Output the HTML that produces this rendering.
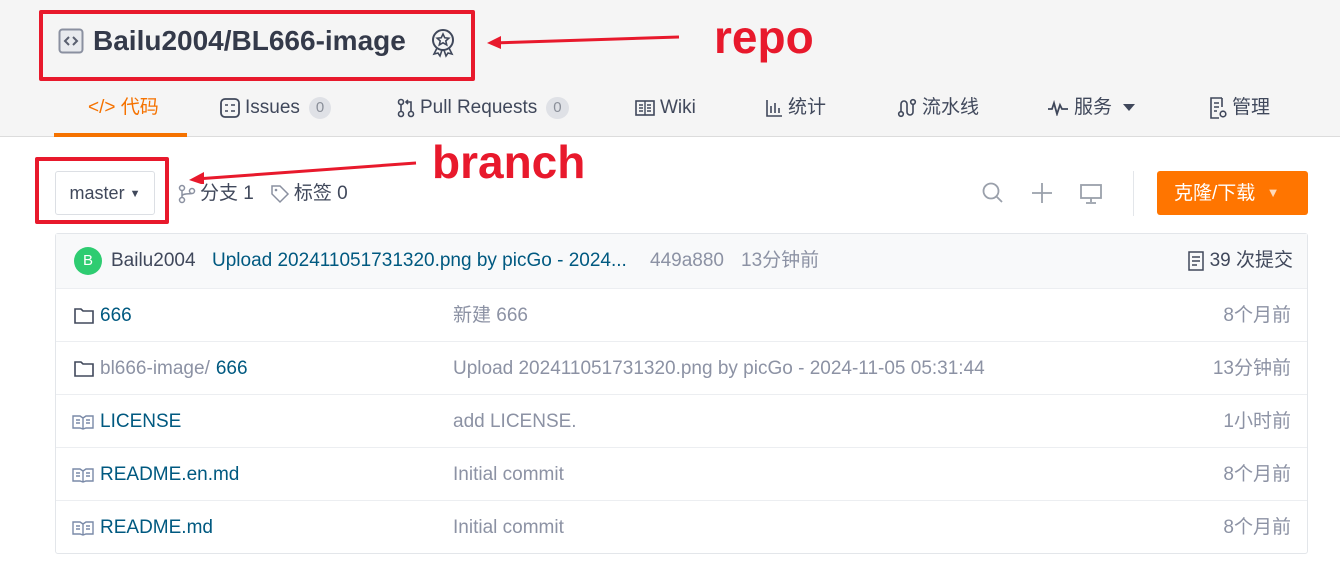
<!DOCTYPE html>
<html><head><meta charset="utf-8"><style>
*{box-sizing:border-box;margin:0;padding:0}
body{width:1340px;height:581px;overflow:hidden;background:#fff;font-family:"Liberation Sans","Noto Sans CJK SC",sans-serif;color:#40485b;position:relative}
.top{position:absolute;left:0;top:0;width:1340px;height:137px;background:#f5f5f5;border-bottom:1px solid #dcdcdc}
.abs{position:absolute;white-space:nowrap}
.red{position:absolute;border:4px solid #e8192c;border-radius:2px}
.ann{position:absolute;color:#e8192c;font-weight:bold;font-size:46px;line-height:1}
.nav{font-size:19px;color:#40485b;top:96px;height:24px;line-height:24px;display:flex;align-items:center;gap:5px}
.badge{display:inline-block;background:#dfe1e6;color:#8a8f99;border-radius:11px;font-size:15px;height:22px;line-height:22px;padding:0 7px;margin-left:4px}
.tbl{position:absolute;left:55px;top:233px;width:1253px;height:321px;border:1px solid #e3e6ea;border-radius:3px}
.row{position:absolute;left:0;width:1251px;height:53px;border-top:1px solid #eceef1;font-size:19px}
.row>span{position:absolute;top:1px;height:52px;line-height:52px;white-space:nowrap;display:flex;align-items:center;gap:6px}
.lnk{color:#005980}
.gray{color:#8c92a4}
svg{display:block}
</style></head><body>
<div class="top"></div>
<div class="red" style="left:39px;top:10px;width:436px;height:71px"></div>
<svg class="abs" style="left:58px;top:28px" width="26" height="26" viewBox="0 0 26 26"><rect x="1.5" y="1.5" width="23" height="23" rx="3" fill="#e8eaee" stroke="#8a90a0" stroke-width="2"/><path d="M11 9l-4 4 4 4M15 9l4 4-4 4" fill="none" stroke="#5a6070" stroke-width="2"/></svg>
<div class="abs" style="left:93px;top:24px;font-size:28px;line-height:34px;font-weight:bold;color:#343a4a">Bailu2004/BL666-image</div>
<svg class="abs" style="left:430px;top:28px" width="26" height="30" viewBox="0 0 26 30"><circle cx="13" cy="12" r="10" fill="none" stroke="#40485b" stroke-width="2"/><path d="M13 6l1.8 3.8 4 .4-3 2.7.9 4-3.7-2.1-3.7 2.1.9-4-3-2.7 4-.4z" fill="none" stroke="#40485b" stroke-width="1.6"/><path d="M7 20l-3 6 4-1 2 3 2-6M19 20l3 6-4-1-2 3-2-6" fill="none" stroke="#40485b" stroke-width="1.6"/></svg>
<svg class="abs" style="left:487px;top:30px" width="195" height="20"><path d="M5 13 L192 7" stroke="#e8192c" stroke-width="3"/><path d="M0 13 L14 6 L14 19z" fill="#e8192c"/></svg>
<div class="ann" style="left:714px;top:14px">repo</div>

<div class="abs nav" style="left:88px;color:#f57200">&lt;/&gt; 代码</div>
<div style="position:absolute;left:54px;top:133px;width:133px;height:4px;background:#f57200"></div>
<div class="abs nav" style="left:220px"><svg width="20" height="20" viewBox="0 0 20 20"><rect x="1" y="1" width="18" height="18" rx="4" fill="none" stroke="#40485b" stroke-width="1.8"/><path d="M5 7h3M11 7h4M5 13h3M11 13h4" stroke="#40485b" stroke-width="1.6"/></svg>Issues<span class="badge">0</span></div>
<div class="abs nav" style="left:397px"><svg width="18" height="20" viewBox="0 0 18 20"><circle cx="4" cy="4" r="2.5" fill="none" stroke="#40485b" stroke-width="1.6"/><circle cx="4" cy="16" r="2.5" fill="none" stroke="#40485b" stroke-width="1.6"/><circle cx="14" cy="16" r="2.5" fill="none" stroke="#40485b" stroke-width="1.6"/><path d="M4 6.5v7M14 13.5V4h-5M11 2l-2 2 2 2" fill="none" stroke="#40485b" stroke-width="1.6"/></svg>Pull Requests<span class="badge">0</span></div>
<div class="abs nav" style="left:635px"><svg width="20" height="16" viewBox="0 0 20 16"><rect x="1" y="1" width="18" height="14" fill="none" stroke="#40485b" stroke-width="1.6"/><path d="M10 1v14M4 5h4M4 8h4M4 11h4M12 5h4M12 8h4M12 11h4" stroke="#40485b" stroke-width="1.4"/></svg>Wiki</div>
<div class="abs nav" style="left:765px"><svg width="18" height="18" viewBox="0 0 18 18"><path d="M2 1v16h15M6 7v7M10 4v10M14 9v5" fill="none" stroke="#40485b" stroke-width="1.6"/></svg>统计</div>
<div class="abs nav" style="left:897px"><svg width="20" height="20" viewBox="0 0 20 20"><circle cx="4" cy="16" r="2.3" fill="none" stroke="#40485b" stroke-width="1.6"/><circle cx="16" cy="4" r="2.3" fill="none" stroke="#40485b" stroke-width="1.6"/><path d="M4 13.5V6a3 3 0 016 0v8a3 3 0 006 0V6.5" fill="none" stroke="#40485b" stroke-width="1.6"/></svg>流水线</div>
<div class="abs nav" style="left:1047px"><svg width="22" height="16" viewBox="0 0 22 16"><path d="M1 9h4l2-6 3 11 3-9 2 4h6" fill="none" stroke="#40485b" stroke-width="1.8"/></svg>服务 <svg width="12" height="8" viewBox="0 0 12 8" style="margin-left:6px"><path d="M0 0h12L6 7z" fill="#40485b"/></svg></div>
<div class="abs nav" style="left:1209px"><svg width="18" height="22" viewBox="0 0 18 22"><path d="M13 1H2v20h8M13 1v9" fill="none" stroke="#40485b" stroke-width="1.6"/><path d="M5 6h5M5 10h5M5 14h3" stroke="#40485b" stroke-width="1.5"/><circle cx="14" cy="17" r="2.8" fill="none" stroke="#40485b" stroke-width="1.6"/></svg>管理</div>

<div class="red" style="left:35px;top:157px;width:134px;height:67px"></div>
<div class="abs" style="left:55px;top:171px;width:100px;height:44px;border:1px solid #dcdfe4;border-radius:3px;font-size:18px;line-height:42px;text-align:center;color:#40485b">master <span style="font-size:11px;vertical-align:2px">▼</span></div>
<svg class="abs" style="left:188px;top:160px" width="230" height="24"><path d="M8 19 L228 3" stroke="#e8192c" stroke-width="3"/><path d="M1 20 L16 12 L16 25z" fill="#e8192c"/></svg>
<div class="ann" style="left:432px;top:139px">branch</div>
<div class="abs" style="left:178px;top:182px;height:24px;font-size:19px;line-height:24px;color:#40485b;display:flex;align-items:center;gap:4px"><svg width="18" height="20" viewBox="0 0 18 20"><circle cx="4" cy="4" r="2.5" fill="none" stroke="#8a90a0" stroke-width="1.5"/><circle cx="4" cy="16" r="2.5" fill="none" stroke="#8a90a0" stroke-width="1.5"/><circle cx="14" cy="7" r="2.5" fill="none" stroke="#8a90a0" stroke-width="1.5"/><path d="M4 6.5v7M4 12c0-3 10-2 10-2.5" fill="none" stroke="#8a90a0" stroke-width="1.5"/></svg>分支 1 <svg width="20" height="20" viewBox="0 0 20 20" style="margin-left:12px"><path d="M2 2h8l8 8-8 8-8-8z" fill="none" stroke="#8a90a0" stroke-width="1.5"/><circle cx="6" cy="6" r="1.3" fill="#8a90a0"/></svg>标签 0</div>
<svg class="abs" style="left:982px;top:182px" width="22" height="22" viewBox="0 0 22 22"><circle cx="9" cy="9" r="7.5" fill="none" stroke="#9aa0ab" stroke-width="1.8"/><path d="M14.5 14.5L20 20" stroke="#9aa0ab" stroke-width="1.8"/></svg>
<svg class="abs" style="left:1032px;top:183px" width="20" height="20"><path d="M10 0v20M0 10h20" stroke="#9aa0ab" stroke-width="1.8"/></svg>
<svg class="abs" style="left:1080px;top:184px" width="22" height="20"><rect x="1" y="1" width="20" height="13" fill="none" stroke="#9aa0ab" stroke-width="1.8"/><path d="M11 14v4M6 19h10" stroke="#9aa0ab" stroke-width="1.8"/></svg>
<div style="position:absolute;left:1133px;top:171px;width:1px;height:45px;background:#e3e6ea"></div>
<div class="abs" style="left:1157px;top:171px;width:151px;height:44px;background:#ff7500;border-radius:3px;color:#fff;font-size:19px;line-height:44px;padding-left:17px">克隆/下载 <span style="font-size:13px;color:#ffd9b8;margin-left:6px;vertical-align:2px">▼</span></div>

<div class="tbl">
<div class="row" style="top:0;border-top:none;background:#f8f9fa;height:54px">
<span style="left:18px"><span style="width:28px;height:28px;border-radius:50%;background:#2ecc71;color:#fff;font-size:15px;text-align:center;line-height:28px;display:block">B</span></span>
<span style="left:55px;color:#40485b">Bailu2004</span>
<span style="left:156px" class="lnk">Upload 202411051731320.png by picGo - 2024...</span>
<span style="left:594px" class="gray">449a880</span>
<span style="left:685px" class="gray">13分钟前</span>
<span style="right:14px;color:#40485b"><svg width="16" height="20" viewBox="0 0 16 20"><path d="M1 1h14v18H1z" fill="none" stroke="#40485b" stroke-width="1.5"/><path d="M4 6h8M4 10h8M4 14h5" stroke="#40485b" stroke-width="1.4"/></svg>39 次提交</span></div>
<div class="row" style="top:54px"><span style="left:18px" class="lnk"><svg width="20" height="16" viewBox="0 0 20 16"><path d="M1 1h6l2 2h10v12H1z" fill="none" stroke="#40485b" stroke-width="1.6"/></svg>666</span><span style="left:397px" class="gray">新建 666</span><span style="right:16px" class="gray">8个月前</span></div>
<div class="row" style="top:107px"><span style="left:18px"><svg width="20" height="16" viewBox="0 0 20 16"><path d="M1 1h6l2 2h10v12H1z" fill="none" stroke="#40485b" stroke-width="1.6"/></svg><span class="gray">bl666-image/</span><span class="lnk">666</span></span><span style="left:397px" class="gray">Upload 202411051731320.png by picGo - 2024-11-05 05:31:44</span><span style="right:16px" class="gray">13分钟前</span></div>
<div class="row" style="top:160px"><span style="left:16px" class="lnk"><svg width="22" height="16" viewBox="0 0 22 16"><path d="M1 2h7l3 2 3-2h7v12h-7l-3 1-3-1H1zM11 4v11M4 6h4M4 9h4M14 6h4M14 9h4" fill="none" stroke="#7a8aa8" stroke-width="1.4"/></svg>LICENSE</span><span style="left:397px" class="gray">add LICENSE.</span><span style="right:16px" class="gray">1小时前</span></div>
<div class="row" style="top:213px"><span style="left:16px" class="lnk"><svg width="22" height="16" viewBox="0 0 22 16"><path d="M1 2h7l3 2 3-2h7v12h-7l-3 1-3-1H1zM11 4v11M4 6h4M4 9h4M14 6h4M14 9h4" fill="none" stroke="#7a8aa8" stroke-width="1.4"/></svg>README.en.md</span><span style="left:397px" class="gray">Initial commit</span><span style="right:16px" class="gray">8个月前</span></div>
<div class="row" style="top:266px"><span style="left:16px" class="lnk"><svg width="22" height="16" viewBox="0 0 22 16"><path d="M1 2h7l3 2 3-2h7v12h-7l-3 1-3-1H1zM11 4v11M4 6h4M4 9h4M14 6h4M14 9h4" fill="none" stroke="#7a8aa8" stroke-width="1.4"/></svg>README.md</span><span style="left:397px" class="gray">Initial commit</span><span style="right:16px" class="gray">8个月前</span></div>
</div>
</body></html>
